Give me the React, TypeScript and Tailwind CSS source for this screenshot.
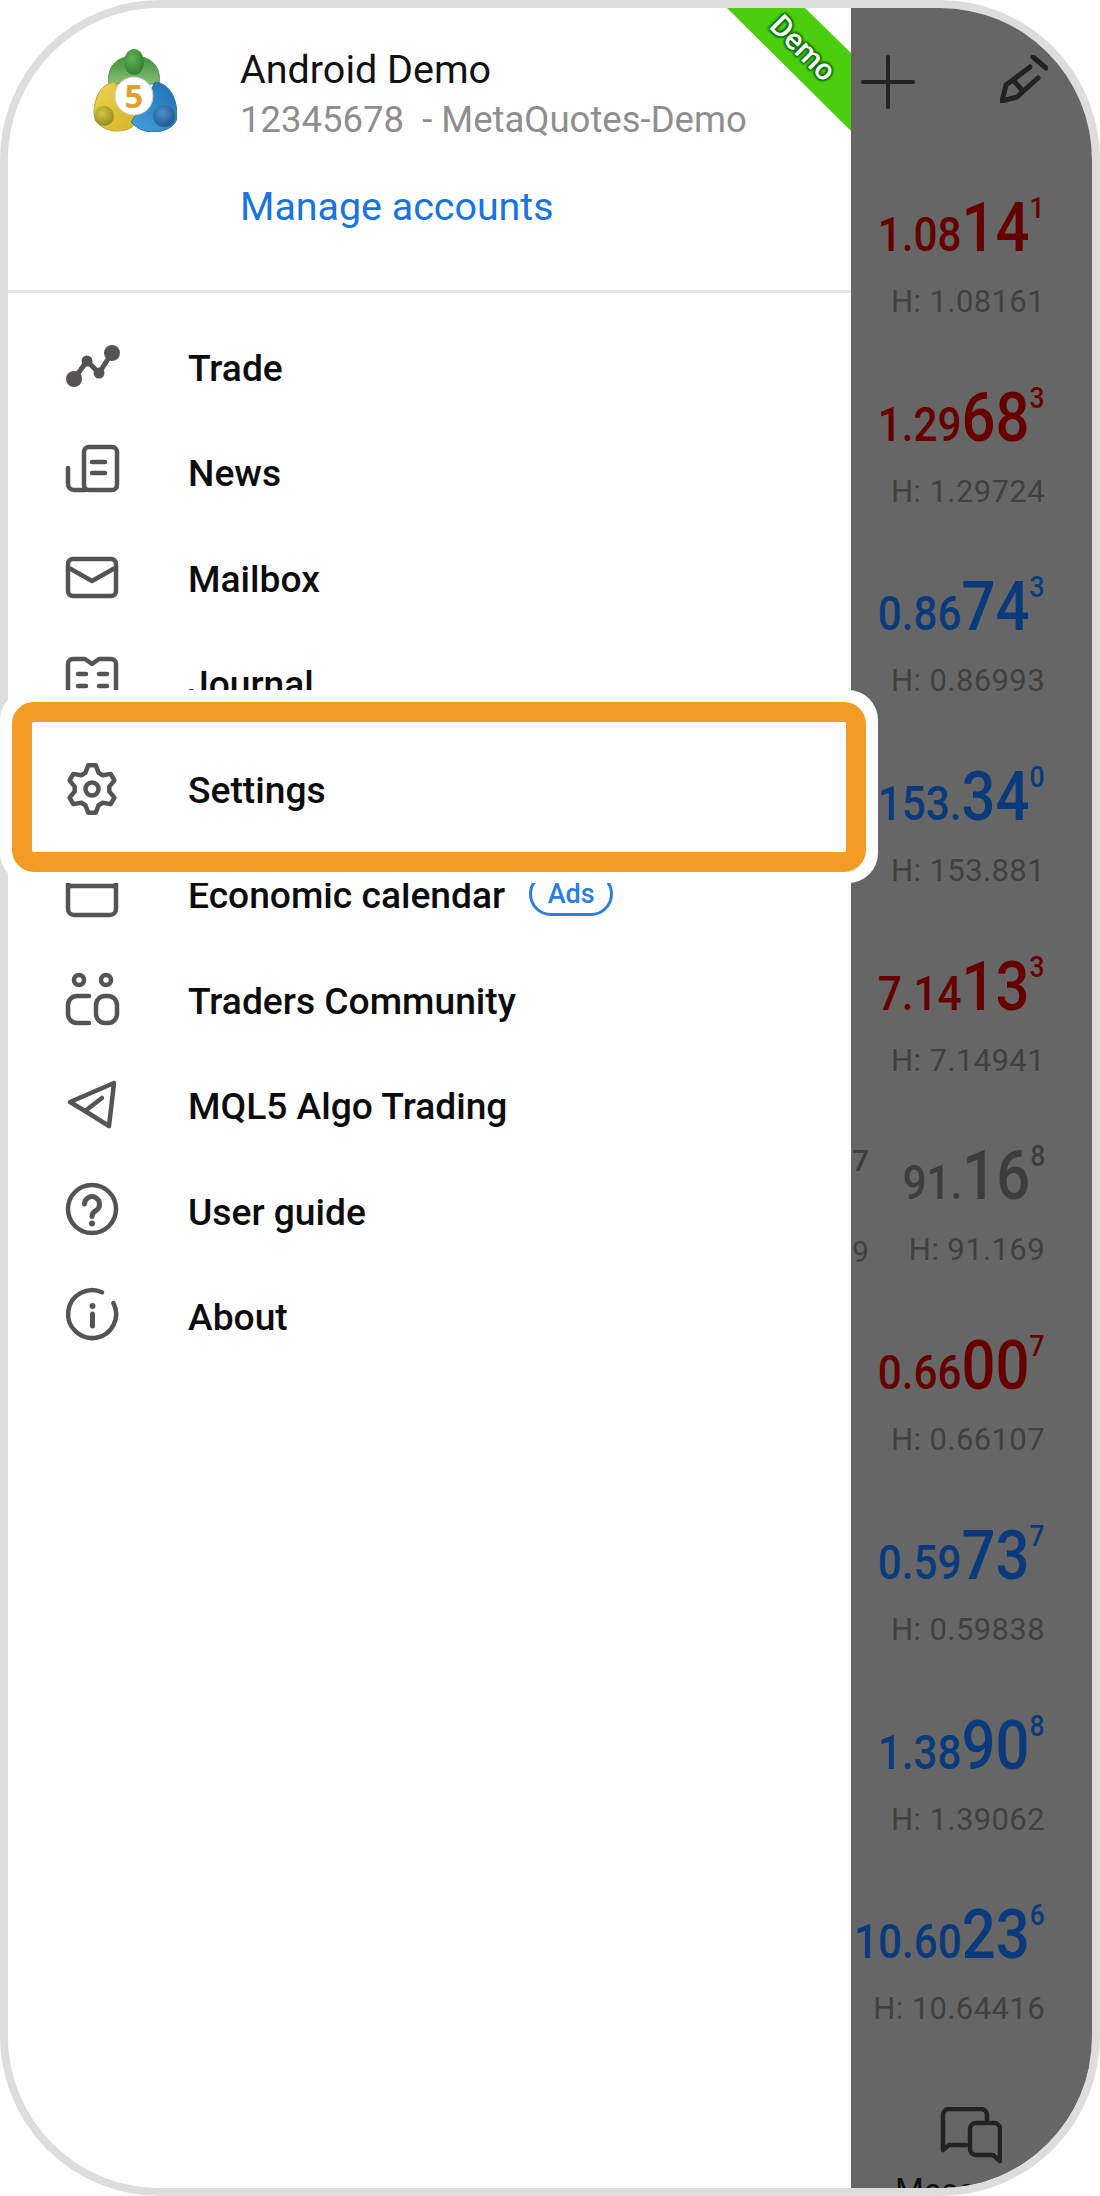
import { Fragment } from "react";

const gearPath = () => {
  // six flat teeth, one pointing straight up
  const pts: string[] = [];
  for (let i = 0; i < 6; i++) {
    const a = (-90 + i * 60) * (Math.PI / 180);
    const steps: [number, number][] = [
      [-22, 17.5],
      [-9, 24],
      [9, 24],
      [22, 17.5],
    ];
    steps.forEach(([d, r]) => {
      const t = a + (d * Math.PI) / 180;
      pts.push(`${(26 + r * Math.cos(t)).toFixed(2)} ${(26 + r * Math.sin(t)).toFixed(2)}`);
    });
  }
  return "M" + pts.join(" L") + " Z";
};

const Icon = ({ children }: { children: React.ReactNode }) => (
  <svg
    viewBox="0 0 52 52"
    className="w-[52px] h-[52px] shrink-0 overflow-visible"
    fill="none"
    stroke="#555353"
    strokeWidth="4.5"
    strokeLinecap="round"
    strokeLinejoin="round"
  >
    {children}
  </svg>
);

const icons: Record<string, React.ReactNode> = {
  trade: (
    <>
      <path d="M8 38 L21 20 L33 32 L46 12" strokeWidth="5" />
      <circle cx="8" cy="38" r="8" fill="#555353" stroke="none" />
      <circle cx="21" cy="20" r="5.5" fill="#555353" stroke="none" />
      <circle cx="33" cy="32" r="5.5" fill="#555353" stroke="none" />
      <circle cx="46" cy="12" r="8" fill="#555353" stroke="none" />
    </>
  ),
  news: (
    <>
      <rect x="18" y="1" width="33" height="43" rx="5" />
      <path d="M2 22 V38 a6 6 0 0 0 6 6 H20" />
      <path d="M26 16 H39 M26 27 H39" />
    </>
  ),
  mail: (
    <>
      <rect x="2" y="7" width="48" height="37" rx="5" />
      <path d="M3 16 L26 29 L49 16" />
    </>
  ),
  journal: (
    <>
      <path d="M2 7 a5 5 0 0 1 5-5 H19 L26 7 L33 2 H45 a5 5 0 0 1 5 5 V44 a5 5 0 0 1-5 5 H7 a5 5 0 0 1-5-5 Z" />
      <path d="M12 17 H20 M33 17 H41 M12 29 H20 M33 29 H41" />
    </>
  ),
  settings: (
    <>
      <path d={gearPath()} />
      <circle cx="26" cy="26" r="6.5" />
    </>
  ),
  calendar: (
    <>
      <rect x="2" y="3" width="48" height="44" rx="6" />
      <path d="M2 18 H50" />
    </>
  ),
  community: (
    <>
      <circle cx="13" cy="6" r="5" />
      <circle cx="40" cy="6" r="5" />
      <rect x="30" y="22" width="21" height="27" rx="9" />
      <path d="M23 22 H11 a9 9 0 0 0-9 9 V40 a9 9 0 0 0 9 9 H23" />
    </>
  ),
  send: (
    <>
      <path d="M48 4 L4 23 L19 32 L43 47 Z" />
      <path d="M19 32 L36 19" />
    </>
  ),
  help: (
    <>
      <circle cx="26" cy="24" r="24" />
      <path d="M18.5 19 a7.5 7.5 0 1 1 11.5 6.5 c-3 1.8-4 3-4 6" strokeWidth="5" />
      <circle cx="26" cy="38.5" r="3" fill="#555353" stroke="none" />
    </>
  ),
  info: (
    <>
      <path d="M47.4 13 A24 24 0 1 1 36 2.2" />
      <path d="M26.5 24 V36" strokeWidth="5" />
      <circle cx="26.5" cy="16" r="3" fill="#555353" stroke="none" />
    </>
  ),
};

const menu = [
  { key: "trade", label: "Trade" },
  { key: "news", label: "News" },
  { key: "mail", label: "Mailbox" },
  { key: "journal", label: "Journal" },
  { key: "settings", label: "Settings" },
  { key: "calendar", label: "Economic calendar" },
  { key: "community", label: "Traders Community" },
  { key: "send", label: "MQL5 Algo Trading" },
  { key: "help", label: "User guide" },
  { key: "info", label: "About" },
];

const RED = "text-[#660000]";
const BLUE = "text-[#0a3a7c]";
const GRAY = "text-[#3d3d3d]";

const quotes = [
  { a: "1.08", b: "14", c: "1", high: "1.08161", color: RED },
  { a: "1.29", b: "68", c: "3", high: "1.29724", color: RED },
  { a: "0.86", b: "74", c: "3", high: "0.86993", color: BLUE },
  { a: "153.", b: "34", c: "0", high: "153.881", color: BLUE },
  { a: "7.14", b: "13", c: "3", high: "7.14941", color: RED },
  { a: "91.", b: "16", c: "8", high: "91.169", color: GRAY },
  { a: "0.66", b: "00", c: "7", high: "0.66107", color: RED },
  { a: "0.59", b: "73", c: "7", high: "0.59838", color: BLUE },
  { a: "1.38", b: "90", c: "8", high: "1.39062", color: BLUE },
  { a: "10.60", b: "23", c: "6", high: "10.64416", color: BLUE },
];

const Logo = () => (
  <svg viewBox="0 0 84 84" className="w-[84px] h-[84px] shrink-0">
    <defs>
      <linearGradient id="g" x1="0" y1="0" x2="0" y2="1">
        <stop offset="0" stopColor="#3f8f3b" />
        <stop offset="1" stopColor="#86bf74" />
      </linearGradient>
      <linearGradient id="y" x1="0" y1="0" x2="1" y2="1">
        <stop offset="0" stopColor="#e9d552" />
        <stop offset="1" stopColor="#d4b526" />
      </linearGradient>
      <linearGradient id="b" x1="1" y1="0" x2="0" y2="1">
        <stop offset="0" stopColor="#1f6fb0" />
        <stop offset="1" stopColor="#46a2dc" />
      </linearGradient>
      <radialGradient id="gh" cx=".4" cy=".35" r=".7">
        <stop offset="0" stopColor="#5fb355" />
        <stop offset="1" stopColor="#2f7f30" />
      </radialGradient>
      <radialGradient id="yh" cx=".4" cy=".35" r=".7">
        <stop offset="0" stopColor="#d6c544" />
        <stop offset="1" stopColor="#8f8a22" />
      </radialGradient>
      <radialGradient id="bh" cx=".4" cy=".35" r=".7">
        <stop offset="0" stopColor="#4b8fc8" />
        <stop offset="1" stopColor="#1c568f" />
      </radialGradient>
    </defs>
    <path d="M16 36 C13 16 27 8 41 8 C55 8 69 16 66 36 Z" fill="url(#g)" stroke="#5d8f4f" />
    <path d="M22 34 C6 36 1 52 1 66 C2 76 12 83 24 83 C34 83 40 80 44 74 L30 50 Z" fill="url(#y)" stroke="#b9a53a" />
    <path d="M62 34 C78 36 84 52 84 68 C84 78 72 84 60 84 C50 84 44 80 38 74 L54 50 Z" fill="url(#b)" stroke="#27709f" />
    <ellipse cx="41" cy="14" rx="10" ry="13" fill="url(#gh)" />
    <circle cx="11" cy="68" r="10" fill="url(#yh)" />
    <circle cx="71" cy="68" r="11" fill="url(#bh)" />
    <circle cx="41" cy="48" r="19" fill="#fff" stroke="#cfcfcf" strokeWidth="1" />
    <text x="41" y="60" textAnchor="middle" fontSize="33" fontWeight="700" fill="#e3a02f" fontFamily="'Open Sans', sans-serif">
      5
    </text>
  </svg>
);

export default function App() {
  return (
    <div className="relative w-[1100px] h-[2196px] bg-white font-['Roboto',sans-serif]">
      <div className="relative flex h-full border-8 border-[#dddddd] rounded-[160px] overflow-hidden">
        {/* drawer */}
        <div className="w-[843px] shrink-0 bg-white flex flex-col">
          <div className="h-[282px] flex shrink-0 pl-[85px]">
            <div className="pt-[40px]">
              <Logo />
            </div>
            <div className="ml-[63px] pt-[42px]">
              <div className="text-[39.5px] leading-[40px] text-[#111]">Android Demo</div>
              <div className="mt-[5px] text-[36.5px] leading-[50px] text-[#8e8e8e]">12345678&nbsp; - MetaQuotes-Demo</div>
              <div className="mt-[40px] text-[39.4px] leading-[44px] text-[#1a73e0]">Manage accounts</div>
            </div>
          </div>
          <div className="h-[3px] bg-[#e6e6e6] shrink-0" />
          <div className="pt-[21px] pl-[58px]">
            {menu.map((m) => (
              <div
                key={m.key}
                className={"h-[105.5px] flex items-center" + (m.key === "settings" ? " relative z-20" : "")}
              >
                <Icon>{icons[m.key]}</Icon>
                <span className="ml-[70px] pt-[2px] text-[37.2px] leading-[44px] font-medium text-[#0c0c0c]">{m.label}</span>
                {m.key === "calendar" && (
                  <span className="ml-[24px] h-[44px] w-[84px] flex items-center justify-center rounded-[22px] border-[3px] border-[#2a7de1] text-[27px] font-medium text-[#2a7de1]">
                    Ads
                  </span>
                )}
              </div>
            ))}
          </div>
        </div>

        {/* dimmed quotes behind the drawer */}
        <div className="flex-1 bg-[#666666] flex flex-col min-w-0">
          <div className="h-[95px] shrink-0 flex items-start pt-[47px] pl-[10px]">
            <svg viewBox="0 0 54 54" className="w-[54px] h-[54px] shrink-0" fill="none" stroke="#222" strokeWidth="4" strokeLinecap="round">
              <path d="M27 2 V52 M2 27 H52" />
            </svg>
            <svg viewBox="0 0 48 48" className="ml-[85px] w-[48px] h-[48px] shrink-0" fill="none" stroke="#222" strokeWidth="5" strokeLinecap="round" strokeLinejoin="round">
              <path d="M2 46 L6 30 L30 12 M2 46 L17 42 L38 23 M33 2 L46 13 M14 26 L21 34" />
            </svg>
          </div>
          <div className="flex-1 pt-[90px] pr-[47px]">
            {quotes.map((q, i) => (
              <div key={i} className="relative h-[189.7px] flex flex-col items-end">
                <div className={"h-[70px] leading-[70px] whitespace-nowrap font-medium origin-right scale-x-[.88] " + q.color}>
                  <span className="text-[48px]">{q.a}</span>
                  <span className="text-[68px]">{q.b}</span>
                  <span className="text-[30px] leading-none align-[33px]">{q.c}</span>
                </div>
                <div className="mt-[19px] h-[40px] leading-[40px] text-[31px] text-[#404040] tracking-[.4px] whitespace-nowrap">
                  H: {q.high}
                </div>
                {i === 5 && (
                  <Fragment>
                    <span className="absolute left-[1px] top-[-3px] text-[30px] font-medium text-[#3d3d3d]">7</span>
                    <span className="absolute left-[1px] top-[88px] text-[30px] text-[#404040]">9</span>
                  </Fragment>
                )}
              </div>
            ))}
          </div>
        </div>

        {/* tab bar of the page behind */}
        <div className="absolute left-[843px] right-0 bottom-0 h-[121px] border-t border-[#636363] bg-[#666666] flex flex-col items-start">
          <svg viewBox="0 0 62 58" className="ml-[89px] mt-[39px] w-[62px] h-[58px] shrink-0" fill="none" stroke="#222" strokeWidth="4.5" strokeLinecap="round" strokeLinejoin="round">
            <path d="M26 38 H9 L3 43 V8 a6 6 0 0 1 6-6 H41 a6 6 0 0 1 6 6 V15" />
            <path d="M36 16 H54 a6 6 0 0 1 6 6 V54 L53 48 H36 a6 6 0 0 1-6-6 V22 a6 6 0 0 1 6-6 Z" />
          </svg>
          <span className="ml-[44px] mt-[6px] text-[33px] leading-[40px] text-[#111]">Messages</span>
        </div>

        {/* demo ribbon */}
        <svg viewBox="0 0 124 123" className="absolute left-[719px] top-0 w-[124px] h-[123px]">
          <polygon points="0,0 78,0 124,45 124,123" fill="#4bce0e" />
        </svg>
        <span className="absolute left-[745px] top-[20px] w-[100px] text-center rotate-45 text-[30px] leading-[40px] font-medium text-white [text-shadow:0_0_3px_#04690a,0_0_3px_#04690a,0_0_3px_#04690a,0_0_3px_#04690a,0_0_3px_#04690a,0_0_3px_#04690a]">
          Demo
        </span>
      </div>

      {/* highlight around Settings */}
      <div className="absolute left-0 top-[690px] w-[878px] h-[193px] pl-[12px] pr-[12px] pt-[12px] pb-[11px] rounded-[30px] bg-white z-10">
        <div className="h-full border-[20px] border-[#f49b26] rounded-[22px] bg-white" />
      </div>
    </div>
  );
}
